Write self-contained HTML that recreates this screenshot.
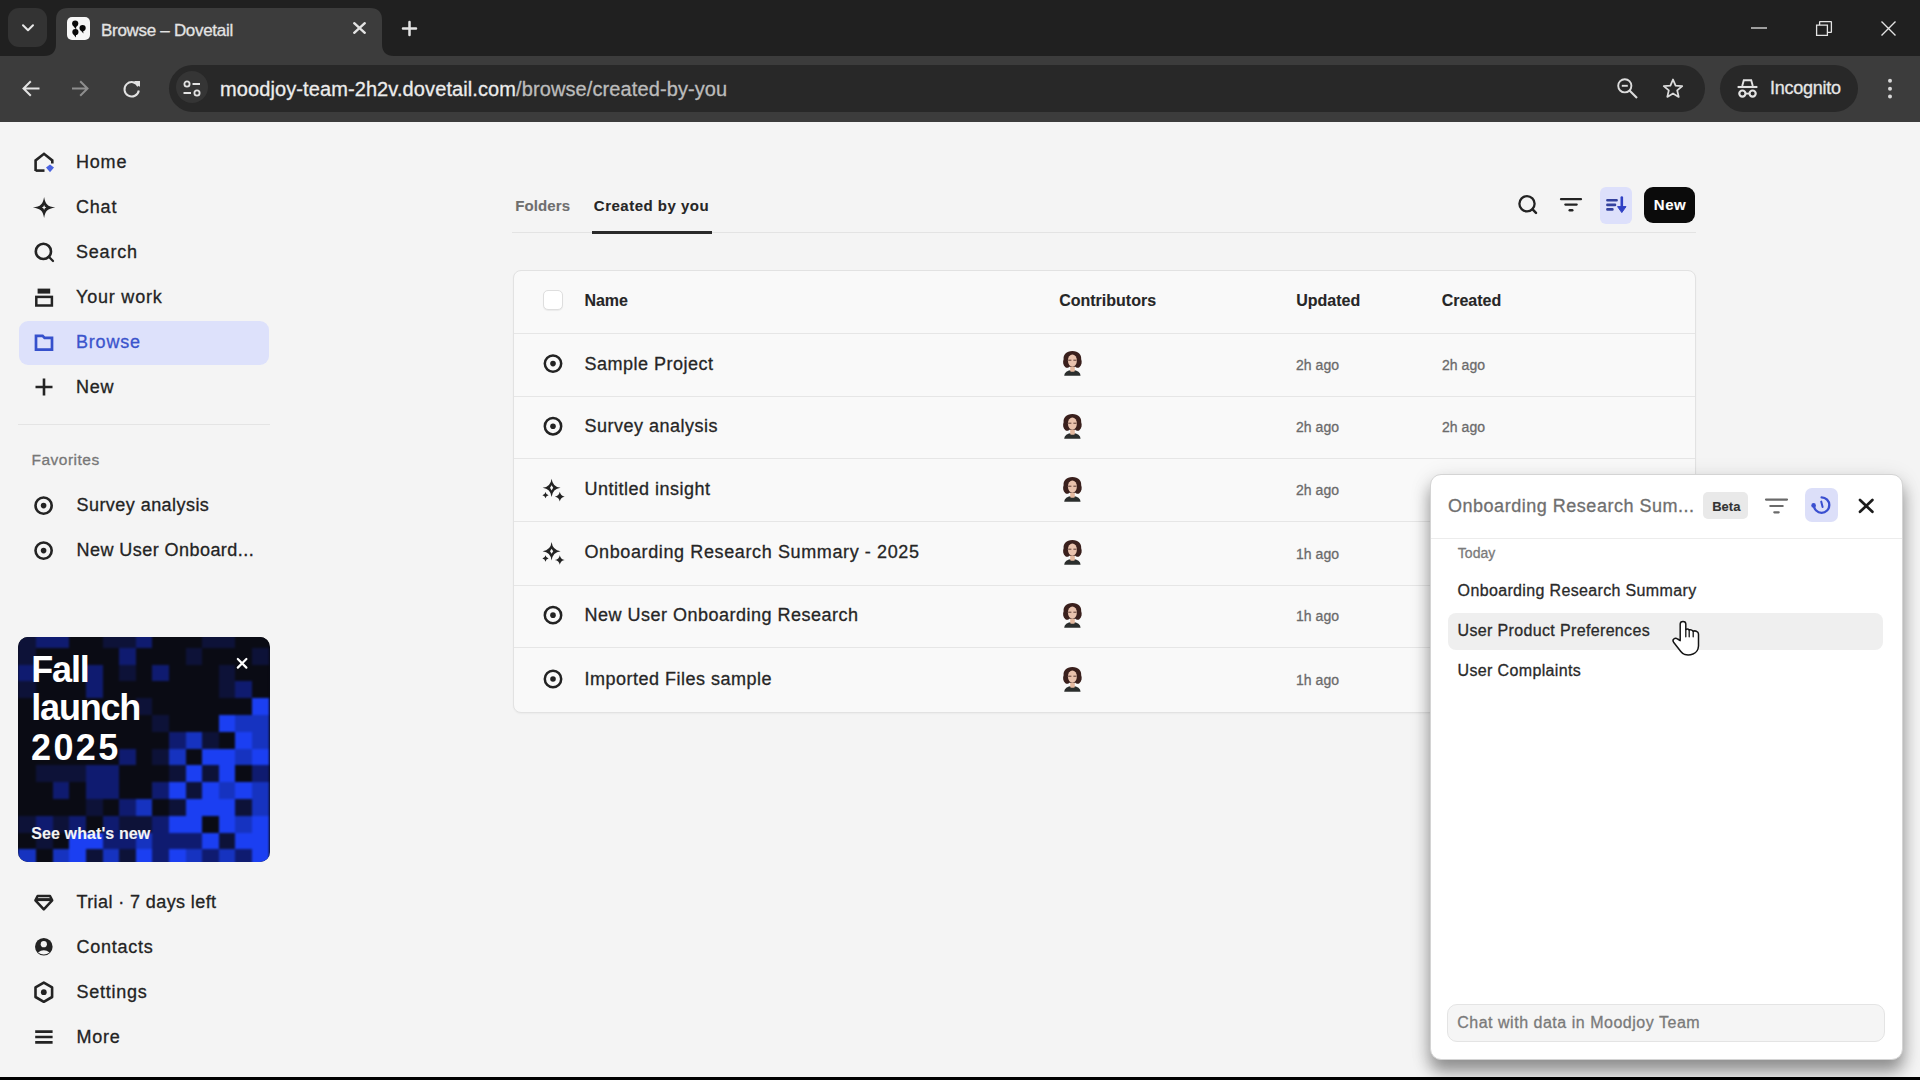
<!DOCTYPE html>
<html><head><meta charset="utf-8">
<style>
*{box-sizing:border-box;margin:0;padding:0}
html,body{width:1920px;height:1080px;overflow:hidden;background:#f4f4f4;font-family:"Liberation Sans",sans-serif;color:#1f1f1f;position:relative}
.r{position:absolute}
.t{position:absolute;white-space:nowrap;line-height:1;-webkit-text-stroke:0.3px currentColor}
svg{position:absolute;overflow:visible}
</style></head>
<body>
<div class="r" style="left:0px;top:0px;width:1920px;height:56px;background:#202020;border-radius:0px;"></div>
<div class="r" style="left:0px;top:56px;width:1920px;height:66px;background:#3c3c3c;border-radius:0px;"></div>
<div class="r" style="left:8px;top:8px;width:39px;height:39px;background:#333333;border-radius:11px;"></div>
<svg style="left:22px;top:24px;" width="12" height="8" viewBox="0 0 12 8"><path d="M1 1.2 L6 6.2 L11 1.2" fill="none" stroke="#e8e8e8" stroke-width="2" stroke-linecap="round" stroke-linejoin="round"/></svg>
<svg style="left:44px;top:8px;" width="352" height="48" viewBox="0 0 352 48"><path d="M0 48 Q12 48 12 36 L12 12 Q12 0 24 0 L326 0 Q338 0 338 12 L338 36 Q338 48 350 48 Z" fill="#3c3c3c"/></svg>
<div class="r" style="left:67px;top:17px;width:23px;height:23px;background:#f7f7f7;border-radius:5px;"></div>
<svg style="left:67px;top:17px;" width="23" height="23" viewBox="0 0 23 23"><g fill="#0a0a0a"><circle cx="8.2" cy="6.6" r="3.1"/><path d="M6 6.5 Q6.5 10.8 9.3 12.6 Q8.6 9.2 10.6 7.4 Z"/><circle cx="15.6" cy="11" r="3.1"/><path d="M13.3 10.8 Q13.8 15 16.4 16.6 Q15.8 13.4 18 11.8 Z"/><circle cx="8.4" cy="15" r="3.1"/><path d="M6.2 15 Q6.6 18.8 8.8 20.6 Q8.4 17.6 10.8 16.2 Z"/></g></svg>
<div class="t" style="left:101px;top:21.91px;font-size:17px;color:#e3e3e3;font-weight:400;letter-spacing:-0.3px;">Browse – Dovetail</div>
<svg style="left:353px;top:22px;" width="13" height="12" viewBox="0 0 13 12"><path d="M1.2 1.2 L11.8 10.8 M11.8 1.2 L1.2 10.8" stroke="#e3e3e3" stroke-width="2.4" stroke-linecap="round"/></svg>
<svg style="left:402px;top:21px;" width="15" height="15" viewBox="0 0 15 15"><path d="M7.5 1 V14 M1 7.5 H14" stroke="#e3e3e3" stroke-width="2.5" stroke-linecap="round"/></svg>
<svg style="left:1751px;top:27px;" width="16" height="2" viewBox="0 0 16 2"><path d="M0 1 H16" stroke="#e3e3e3" stroke-width="1.3"/></svg>
<svg style="left:1816px;top:21px;" width="16" height="15" viewBox="0 0 16 15"><path d="M0.6 4.2 H11.4 V14.4 H0.6 Z M3.6 4.2 V1 Q3.6 0.6 4 0.6 H15 Q15.4 0.6 15.4 1 V11 Q15.4 11.4 15 11.4 H11.4" fill="none" stroke="#e3e3e3" stroke-width="1.3"/></svg>
<svg style="left:1881px;top:21px;" width="15" height="15" viewBox="0 0 15 15"><path d="M0.5 0.5 L14.5 14.5 M14.5 0.5 L0.5 14.5" stroke="#e3e3e3" stroke-width="1.4"/></svg>
<svg style="left:22px;top:80px;" width="18" height="17" viewBox="0 0 18 17"><path d="M17.5 8.5 H2 M8.8 1.2 L1.5 8.5 L8.8 15.8" fill="none" stroke="#e3e3e3" stroke-width="2"/></svg>
<svg style="left:72px;top:80px;" width="17" height="17" viewBox="0 0 17 17"><path d="M0 8.5 H15.5 M8.2 1.2 L15.5 8.5 L8.2 15.8" fill="none" stroke="#8e8e8e" stroke-width="2"/></svg>
<svg style="left:123px;top:80px;" width="18" height="18" viewBox="0 0 18 18"><path d="M15.2 6.2 A7.2 7.2 0 1 0 15.8 10.5" fill="none" stroke="#e3e3e3" stroke-width="2"/><path d="M11 1 H17 V7 Z" fill="#e3e3e3"/></svg>
<div class="r" style="left:169px;top:65px;width:1536px;height:47px;background:#282828;border-radius:23.5px;"></div>
<div class="r" style="left:176px;top:71px;width:32px;height:32px;background:#353535;border-radius:16px;"></div>
<svg style="left:181px;top:79px;" width="22" height="20" viewBox="0 0 22 20"><circle cx="6" cy="5" r="2.6" fill="none" stroke="#e3e3e3" stroke-width="1.8"/><path d="M11.5 5 H19" stroke="#e3e3e3" stroke-width="2"/><path d="M2.5 14 H10" stroke="#e3e3e3" stroke-width="2"/><circle cx="16" cy="14" r="2.6" fill="none" stroke="#e3e3e3" stroke-width="1.8"/></svg>
<div class="t" style="left:220px;top:78.87px;font-size:20px;color:#ececec;font-weight:400;letter-spacing:0.1px;">moodjoy-team-2h2v.dovetail.com<span style="color:#bcbcbc">/browse/created-by-you</span></div>
<svg style="left:1617px;top:78px;" width="22" height="21" viewBox="0 0 22 21"><circle cx="7.8" cy="7.8" r="6.6" fill="none" stroke="#dcdcdc" stroke-width="1.9"/><path d="M4.8 7.8 H10.8" stroke="#dcdcdc" stroke-width="1.9"/><path d="M12.5 12.5 L20 20" stroke="#dcdcdc" stroke-width="2.1"/></svg>
<svg style="left:1662px;top:78px;" width="22" height="21" viewBox="0 0 22 21"><path d="M11 1.5 L13.6 7.6 L20.2 8.1 L15.2 12.4 L16.7 18.9 L11 15.4 L5.3 18.9 L6.8 12.4 L1.8 8.1 L8.4 7.6 Z" fill="none" stroke="#dcdcdc" stroke-width="1.8" stroke-linejoin="round"/></svg>
<div class="r" style="left:1720px;top:65px;width:138px;height:47px;background:#282828;border-radius:23.5px;"></div>
<svg style="left:1737px;top:79px;" width="21" height="19" viewBox="0 0 21 19"><path d="M5.2 7 L6.8 1.2 H14.2 L15.8 7" fill="none" stroke="#e3e3e3" stroke-width="1.9"/><path d="M0.6 8 H20.4" stroke="#e3e3e3" stroke-width="2.1"/><circle cx="5.4" cy="14.6" r="3.1" fill="none" stroke="#e3e3e3" stroke-width="2.2"/><circle cx="15.6" cy="14.6" r="3.1" fill="none" stroke="#e3e3e3" stroke-width="2.2"/><path d="M8 14.6 H13" stroke="#e3e3e3" stroke-width="1.8"/></svg>
<div class="t" style="left:1770px;top:79.46px;font-size:18px;color:#e6e6e6;font-weight:400;letter-spacing:-0.25px;">Incognito</div>
<svg style="left:1886px;top:78px;" width="8" height="21" viewBox="0 0 8 21"><circle cx="4" cy="2.7" r="2" fill="#d8d8d8"/><circle cx="4" cy="10.8" r="2" fill="#d8d8d8"/><circle cx="4" cy="18.5" r="2" fill="#d8d8d8"/></svg>
<div class="r" style="left:19px;top:320.5px;width:250px;height:44px;background:#dde1fb;border-radius:9px;"></div>
<div class="t" style="left:76px;top:153.06px;font-size:18px;color:#232323;font-weight:400;letter-spacing:0.8px;">Home</div>
<div class="t" style="left:76px;top:198.06px;font-size:18px;color:#232323;font-weight:400;letter-spacing:0.8px;">Chat</div>
<div class="t" style="left:76px;top:243.06px;font-size:18px;color:#232323;font-weight:400;letter-spacing:0.8px;">Search</div>
<div class="t" style="left:76px;top:288.26px;font-size:18px;color:#232323;font-weight:400;letter-spacing:0.8px;">Your work</div>
<div class="t" style="left:76px;top:333.46px;font-size:18px;color:#3b54cc;font-weight:400;letter-spacing:0.8px;">Browse</div>
<div class="t" style="left:76px;top:377.96px;font-size:18px;color:#232323;font-weight:400;letter-spacing:0.8px;">New</div>
<svg style="left:0px;top:0px;" width="1" height="1" viewBox="0 0 1 1"><path d="M35.6 171 V160.4 L44 153.8 L52.3 160.4 V163.5" fill="none" stroke="#232323" stroke-width="2.6" stroke-linejoin="miter"/><path d="M35.6 170.6 H44.5" fill="none" stroke="#232323" stroke-width="2.6"/><path d="M50 164.6 L54 167.6 L50 172.3 L46 167.6 Z" fill="#4a63e0"/><path d="M44.1 196.9 C45.4 204.3 47.300000000000004 206.2 55.3 207.5 C47.300000000000004 208.8 45.4 210.7 44.1 218.1 C42.800000000000004 210.7 40.9 208.8 32.900000000000006 207.5 C40.9 206.2 42.800000000000004 204.3 44.1 196.9 Z" fill="#232323"/><path d="M44.1 204.9 Q44.5 207.1 46.3 207.5 Q44.5 207.9 44.1 210.1 Q43.7 207.9 41.9 207.5 Q43.7 207.1 44.1 204.9 Z" fill="#f4f4f4"/><circle cx="43.4" cy="251.4" r="7.6" fill="none" stroke="#232323" stroke-width="2.6"/><path d="M48.8 256.8 L53 261" stroke="#232323" stroke-width="2.3" stroke-linecap="round"/><rect x="37.6" y="288.6" width="12.6" height="5" fill="#232323"/><rect x="36.3" y="296.9" width="15.6" height="8.6" fill="none" stroke="#232323" stroke-width="2.5"/><path d="M36 349.6 V335.9 H42.6 L44.6 337.9 H52 V349.6 Z" fill="none" stroke="#3550cc" stroke-width="2.7" stroke-linejoin="miter"/><path d="M44 378.5 V395.5 M35.5 387 H52.5" stroke="#232323" stroke-width="2.6"/></svg>
<div class="r" style="left:18px;top:423.5px;width:252px;height:1.5px;background:#e4e4e4;border-radius:0px;"></div>
<div class="t" style="left:31.5px;top:452.08px;font-size:15.5px;color:#777777;font-weight:400;letter-spacing:0.5px;">Favorites</div>
<div class="t" style="left:76.5px;top:496.06px;font-size:18px;color:#232323;font-weight:400;letter-spacing:0.45px;">Survey analysis</div>
<svg style="left:0px;top:0px;" width="1" height="1" viewBox="0 0 1 1"><circle cx="43.6" cy="505.6" r="8.1" fill="none" stroke="#232323" stroke-width="2.6"/><circle cx="43.6" cy="505.6" r="2.8" fill="#232323"/></svg>
<div class="t" style="left:76.5px;top:541.06px;font-size:18px;color:#232323;font-weight:400;letter-spacing:0.45px;">New User Onboard...</div>
<svg style="left:0px;top:0px;" width="1" height="1" viewBox="0 0 1 1"><circle cx="43.6" cy="550.6" r="8.1" fill="none" stroke="#232323" stroke-width="2.6"/><circle cx="43.6" cy="550.6" r="2.8" fill="#232323"/></svg>
<div class="r" style="left:18px;top:637px;width:252px;height:225px;border-radius:10px;overflow:hidden;background:#0a0b14"><div style="position:absolute;left:0;top:0;width:252px;height:225px;filter:blur(1px)"><div style="position:absolute;left:0.0px;top:-6.0px;width:18.5px;height:17.2px;background:#0d1238"></div><div style="position:absolute;left:18.1px;top:-6.0px;width:17.0px;height:17.2px;background:#0f1b70"></div><div style="position:absolute;left:34.7px;top:-6.0px;width:17.0px;height:17.2px;background:#0f1b70"></div><div style="position:absolute;left:51.3px;top:-6.0px;width:17.0px;height:17.2px;background:#0a0b14"></div><div style="position:absolute;left:67.9px;top:-6.0px;width:17.0px;height:17.2px;background:#0a0b14"></div><div style="position:absolute;left:84.5px;top:-6.0px;width:17.0px;height:17.2px;background:#0d1238"></div><div style="position:absolute;left:101.1px;top:-6.0px;width:17.0px;height:17.2px;background:#0d1238"></div><div style="position:absolute;left:117.7px;top:-6.0px;width:17.0px;height:17.2px;background:#0f1b70"></div><div style="position:absolute;left:134.3px;top:-6.0px;width:17.0px;height:17.2px;background:#0a0b14"></div><div style="position:absolute;left:150.9px;top:-6.0px;width:17.0px;height:17.2px;background:#0a0b14"></div><div style="position:absolute;left:167.5px;top:-6.0px;width:17.0px;height:17.2px;background:#0a0b14"></div><div style="position:absolute;left:184.1px;top:-6.0px;width:17.0px;height:17.2px;background:#0d1238"></div><div style="position:absolute;left:200.7px;top:-6.0px;width:17.0px;height:17.2px;background:#0d1238"></div><div style="position:absolute;left:217.3px;top:-6.0px;width:17.0px;height:17.2px;background:#0a0b14"></div><div style="position:absolute;left:233.9px;top:-6.0px;width:17.0px;height:17.2px;background:#0a0b14"></div><div style="position:absolute;left:0.0px;top:10.8px;width:18.5px;height:17.2px;background:#0d1238"></div><div style="position:absolute;left:18.1px;top:10.8px;width:17.0px;height:17.2px;background:#0a0b14"></div><div style="position:absolute;left:34.7px;top:10.8px;width:17.0px;height:17.2px;background:#0a0b14"></div><div style="position:absolute;left:51.3px;top:10.8px;width:17.0px;height:17.2px;background:#0a0b14"></div><div style="position:absolute;left:67.9px;top:10.8px;width:17.0px;height:17.2px;background:#0a0b14"></div><div style="position:absolute;left:84.5px;top:10.8px;width:17.0px;height:17.2px;background:#0a0b14"></div><div style="position:absolute;left:101.1px;top:10.8px;width:17.0px;height:17.2px;background:#0f1b70"></div><div style="position:absolute;left:117.7px;top:10.8px;width:17.0px;height:17.2px;background:#0a0b14"></div><div style="position:absolute;left:134.3px;top:10.8px;width:17.0px;height:17.2px;background:#0a0b14"></div><div style="position:absolute;left:150.9px;top:10.8px;width:17.0px;height:17.2px;background:#0a0b14"></div><div style="position:absolute;left:167.5px;top:10.8px;width:17.0px;height:17.2px;background:#0d1238"></div><div style="position:absolute;left:184.1px;top:10.8px;width:17.0px;height:17.2px;background:#0a0b14"></div><div style="position:absolute;left:200.7px;top:10.8px;width:17.0px;height:17.2px;background:#0a0b14"></div><div style="position:absolute;left:217.3px;top:10.8px;width:17.0px;height:17.2px;background:#0a0b14"></div><div style="position:absolute;left:233.9px;top:10.8px;width:17.0px;height:17.2px;background:#0d1238"></div><div style="position:absolute;left:0.0px;top:27.6px;width:18.5px;height:17.2px;background:#0f1b70"></div><div style="position:absolute;left:18.1px;top:27.6px;width:17.0px;height:17.2px;background:#0a0b14"></div><div style="position:absolute;left:34.7px;top:27.6px;width:17.0px;height:17.2px;background:#0a0b14"></div><div style="position:absolute;left:51.3px;top:27.6px;width:17.0px;height:17.2px;background:#0a0b14"></div><div style="position:absolute;left:67.9px;top:27.6px;width:17.0px;height:17.2px;background:#0f1b70"></div><div style="position:absolute;left:84.5px;top:27.6px;width:17.0px;height:17.2px;background:#0a0b14"></div><div style="position:absolute;left:101.1px;top:27.6px;width:17.0px;height:17.2px;background:#0d1238"></div><div style="position:absolute;left:117.7px;top:27.6px;width:17.0px;height:17.2px;background:#0a0b14"></div><div style="position:absolute;left:134.3px;top:27.6px;width:17.0px;height:17.2px;background:#0f1b70"></div><div style="position:absolute;left:150.9px;top:27.6px;width:17.0px;height:17.2px;background:#0a0b14"></div><div style="position:absolute;left:167.5px;top:27.6px;width:17.0px;height:17.2px;background:#0a0b14"></div><div style="position:absolute;left:184.1px;top:27.6px;width:17.0px;height:17.2px;background:#0a0b14"></div><div style="position:absolute;left:200.7px;top:27.6px;width:17.0px;height:17.2px;background:#0d1238"></div><div style="position:absolute;left:217.3px;top:27.6px;width:17.0px;height:17.2px;background:#0a0b14"></div><div style="position:absolute;left:233.9px;top:27.6px;width:17.0px;height:17.2px;background:#0a0b14"></div><div style="position:absolute;left:0.0px;top:44.4px;width:18.5px;height:17.2px;background:#0d1238"></div><div style="position:absolute;left:18.1px;top:44.4px;width:17.0px;height:17.2px;background:#0a0b14"></div><div style="position:absolute;left:34.7px;top:44.4px;width:17.0px;height:17.2px;background:#0a0b14"></div><div style="position:absolute;left:51.3px;top:44.4px;width:17.0px;height:17.2px;background:#0a0b14"></div><div style="position:absolute;left:67.9px;top:44.4px;width:17.0px;height:17.2px;background:#0f1b70"></div><div style="position:absolute;left:84.5px;top:44.4px;width:17.0px;height:17.2px;background:#0a0b14"></div><div style="position:absolute;left:101.1px;top:44.4px;width:17.0px;height:17.2px;background:#0a0b14"></div><div style="position:absolute;left:117.7px;top:44.4px;width:17.0px;height:17.2px;background:#0a0b14"></div><div style="position:absolute;left:134.3px;top:44.4px;width:17.0px;height:17.2px;background:#0a0b14"></div><div style="position:absolute;left:150.9px;top:44.4px;width:17.0px;height:17.2px;background:#0a0b14"></div><div style="position:absolute;left:167.5px;top:44.4px;width:17.0px;height:17.2px;background:#0a0b14"></div><div style="position:absolute;left:184.1px;top:44.4px;width:17.0px;height:17.2px;background:#0a0b14"></div><div style="position:absolute;left:200.7px;top:44.4px;width:17.0px;height:17.2px;background:#0d1238"></div><div style="position:absolute;left:217.3px;top:44.4px;width:17.0px;height:17.2px;background:#0f1b70"></div><div style="position:absolute;left:233.9px;top:44.4px;width:17.0px;height:17.2px;background:#0a0b14"></div><div style="position:absolute;left:0.0px;top:61.2px;width:18.5px;height:17.2px;background:#0a0b14"></div><div style="position:absolute;left:18.1px;top:61.2px;width:17.0px;height:17.2px;background:#0a0b14"></div><div style="position:absolute;left:34.7px;top:61.2px;width:17.0px;height:17.2px;background:#0a0b14"></div><div style="position:absolute;left:51.3px;top:61.2px;width:17.0px;height:17.2px;background:#0a0b14"></div><div style="position:absolute;left:67.9px;top:61.2px;width:17.0px;height:17.2px;background:#0a0b14"></div><div style="position:absolute;left:84.5px;top:61.2px;width:17.0px;height:17.2px;background:#0a0b14"></div><div style="position:absolute;left:101.1px;top:61.2px;width:17.0px;height:17.2px;background:#0a0b14"></div><div style="position:absolute;left:117.7px;top:61.2px;width:17.0px;height:17.2px;background:#0d1238"></div><div style="position:absolute;left:134.3px;top:61.2px;width:17.0px;height:17.2px;background:#0a0b14"></div><div style="position:absolute;left:150.9px;top:61.2px;width:17.0px;height:17.2px;background:#0a0b14"></div><div style="position:absolute;left:167.5px;top:61.2px;width:17.0px;height:17.2px;background:#0a0b14"></div><div style="position:absolute;left:184.1px;top:61.2px;width:17.0px;height:17.2px;background:#0a0b14"></div><div style="position:absolute;left:200.7px;top:61.2px;width:17.0px;height:17.2px;background:#0a0b14"></div><div style="position:absolute;left:217.3px;top:61.2px;width:17.0px;height:17.2px;background:#0a0b14"></div><div style="position:absolute;left:233.9px;top:61.2px;width:17.0px;height:17.2px;background:#1b3ff2"></div><div style="position:absolute;left:0.0px;top:78.0px;width:18.5px;height:17.2px;background:#0a0b14"></div><div style="position:absolute;left:18.1px;top:78.0px;width:17.0px;height:17.2px;background:#0a0b14"></div><div style="position:absolute;left:34.7px;top:78.0px;width:17.0px;height:17.2px;background:#0a0b14"></div><div style="position:absolute;left:51.3px;top:78.0px;width:17.0px;height:17.2px;background:#0a0b14"></div><div style="position:absolute;left:67.9px;top:78.0px;width:17.0px;height:17.2px;background:#0a0b14"></div><div style="position:absolute;left:84.5px;top:78.0px;width:17.0px;height:17.2px;background:#0a0b14"></div><div style="position:absolute;left:101.1px;top:78.0px;width:17.0px;height:17.2px;background:#0a0b14"></div><div style="position:absolute;left:117.7px;top:78.0px;width:17.0px;height:17.2px;background:#0a0b14"></div><div style="position:absolute;left:134.3px;top:78.0px;width:17.0px;height:17.2px;background:#0d1238"></div><div style="position:absolute;left:150.9px;top:78.0px;width:17.0px;height:17.2px;background:#0a0b14"></div><div style="position:absolute;left:167.5px;top:78.0px;width:17.0px;height:17.2px;background:#0a0b14"></div><div style="position:absolute;left:184.1px;top:78.0px;width:17.0px;height:17.2px;background:#0a0b14"></div><div style="position:absolute;left:200.7px;top:78.0px;width:17.0px;height:17.2px;background:#1b3ff2"></div><div style="position:absolute;left:217.3px;top:78.0px;width:17.0px;height:17.2px;background:#1633c0"></div><div style="position:absolute;left:233.9px;top:78.0px;width:17.0px;height:17.2px;background:#1633c0"></div><div style="position:absolute;left:0.0px;top:94.8px;width:18.5px;height:17.2px;background:#0a0b14"></div><div style="position:absolute;left:18.1px;top:94.8px;width:17.0px;height:17.2px;background:#0a0b14"></div><div style="position:absolute;left:34.7px;top:94.8px;width:17.0px;height:17.2px;background:#0a0b14"></div><div style="position:absolute;left:51.3px;top:94.8px;width:17.0px;height:17.2px;background:#0a0b14"></div><div style="position:absolute;left:67.9px;top:94.8px;width:17.0px;height:17.2px;background:#0a0b14"></div><div style="position:absolute;left:84.5px;top:94.8px;width:17.0px;height:17.2px;background:#0a0b14"></div><div style="position:absolute;left:101.1px;top:94.8px;width:17.0px;height:17.2px;background:#0a0b14"></div><div style="position:absolute;left:117.7px;top:94.8px;width:17.0px;height:17.2px;background:#0a0b14"></div><div style="position:absolute;left:134.3px;top:94.8px;width:17.0px;height:17.2px;background:#0a0b14"></div><div style="position:absolute;left:150.9px;top:94.8px;width:17.0px;height:17.2px;background:#0f1b70"></div><div style="position:absolute;left:167.5px;top:94.8px;width:17.0px;height:17.2px;background:#1633c0"></div><div style="position:absolute;left:184.1px;top:94.8px;width:17.0px;height:17.2px;background:#0d1238"></div><div style="position:absolute;left:200.7px;top:94.8px;width:17.0px;height:17.2px;background:#0a0b14"></div><div style="position:absolute;left:217.3px;top:94.8px;width:17.0px;height:17.2px;background:#1b3ff2"></div><div style="position:absolute;left:233.9px;top:94.8px;width:17.0px;height:17.2px;background:#1633c0"></div><div style="position:absolute;left:0.0px;top:111.6px;width:18.5px;height:17.2px;background:#0a0b14"></div><div style="position:absolute;left:18.1px;top:111.6px;width:17.0px;height:17.2px;background:#0a0b14"></div><div style="position:absolute;left:34.7px;top:111.6px;width:17.0px;height:17.2px;background:#0a0b14"></div><div style="position:absolute;left:51.3px;top:111.6px;width:17.0px;height:17.2px;background:#0a0b14"></div><div style="position:absolute;left:67.9px;top:111.6px;width:17.0px;height:17.2px;background:#0a0b14"></div><div style="position:absolute;left:84.5px;top:111.6px;width:17.0px;height:17.2px;background:#0a0b14"></div><div style="position:absolute;left:101.1px;top:111.6px;width:17.0px;height:17.2px;background:#0f1b70"></div><div style="position:absolute;left:117.7px;top:111.6px;width:17.0px;height:17.2px;background:#0a0b14"></div><div style="position:absolute;left:134.3px;top:111.6px;width:17.0px;height:17.2px;background:#0d1238"></div><div style="position:absolute;left:150.9px;top:111.6px;width:17.0px;height:17.2px;background:#1633c0"></div><div style="position:absolute;left:167.5px;top:111.6px;width:17.0px;height:17.2px;background:#0a0b14"></div><div style="position:absolute;left:184.1px;top:111.6px;width:17.0px;height:17.2px;background:#1b3ff2"></div><div style="position:absolute;left:200.7px;top:111.6px;width:17.0px;height:17.2px;background:#1b3ff2"></div><div style="position:absolute;left:217.3px;top:111.6px;width:17.0px;height:17.2px;background:#1633c0"></div><div style="position:absolute;left:233.9px;top:111.6px;width:17.0px;height:17.2px;background:#1b3ff2"></div><div style="position:absolute;left:0.0px;top:128.4px;width:18.5px;height:17.2px;background:#0a0b14"></div><div style="position:absolute;left:18.1px;top:128.4px;width:17.0px;height:17.2px;background:#0d1238"></div><div style="position:absolute;left:34.7px;top:128.4px;width:17.0px;height:17.2px;background:#0d1238"></div><div style="position:absolute;left:51.3px;top:128.4px;width:17.0px;height:17.2px;background:#0d1238"></div><div style="position:absolute;left:67.9px;top:128.4px;width:17.0px;height:17.2px;background:#0f1b70"></div><div style="position:absolute;left:84.5px;top:128.4px;width:17.0px;height:17.2px;background:#0f1b70"></div><div style="position:absolute;left:101.1px;top:128.4px;width:17.0px;height:17.2px;background:#0a0b14"></div><div style="position:absolute;left:117.7px;top:128.4px;width:17.0px;height:17.2px;background:#0a0b14"></div><div style="position:absolute;left:134.3px;top:128.4px;width:17.0px;height:17.2px;background:#0a0b14"></div><div style="position:absolute;left:150.9px;top:128.4px;width:17.0px;height:17.2px;background:#0d1238"></div><div style="position:absolute;left:167.5px;top:128.4px;width:17.0px;height:17.2px;background:#1b3ff2"></div><div style="position:absolute;left:184.1px;top:128.4px;width:17.0px;height:17.2px;background:#0d1238"></div><div style="position:absolute;left:200.7px;top:128.4px;width:17.0px;height:17.2px;background:#1b3ff2"></div><div style="position:absolute;left:217.3px;top:128.4px;width:17.0px;height:17.2px;background:#0a0b14"></div><div style="position:absolute;left:233.9px;top:128.4px;width:17.0px;height:17.2px;background:#0f1b70"></div><div style="position:absolute;left:0.0px;top:145.2px;width:18.5px;height:17.2px;background:#0a0b14"></div><div style="position:absolute;left:18.1px;top:145.2px;width:17.0px;height:17.2px;background:#0a0b14"></div><div style="position:absolute;left:34.7px;top:145.2px;width:17.0px;height:17.2px;background:#0f1b70"></div><div style="position:absolute;left:51.3px;top:145.2px;width:17.0px;height:17.2px;background:#0a0b14"></div><div style="position:absolute;left:67.9px;top:145.2px;width:17.0px;height:17.2px;background:#0f1b70"></div><div style="position:absolute;left:84.5px;top:145.2px;width:17.0px;height:17.2px;background:#0f1b70"></div><div style="position:absolute;left:101.1px;top:145.2px;width:17.0px;height:17.2px;background:#0a0b14"></div><div style="position:absolute;left:117.7px;top:145.2px;width:17.0px;height:17.2px;background:#0a0b14"></div><div style="position:absolute;left:134.3px;top:145.2px;width:17.0px;height:17.2px;background:#0f1b70"></div><div style="position:absolute;left:150.9px;top:145.2px;width:17.0px;height:17.2px;background:#1b3ff2"></div><div style="position:absolute;left:167.5px;top:145.2px;width:17.0px;height:17.2px;background:#0d1238"></div><div style="position:absolute;left:184.1px;top:145.2px;width:17.0px;height:17.2px;background:#1b3ff2"></div><div style="position:absolute;left:200.7px;top:145.2px;width:17.0px;height:17.2px;background:#1633c0"></div><div style="position:absolute;left:217.3px;top:145.2px;width:17.0px;height:17.2px;background:#1b3ff2"></div><div style="position:absolute;left:233.9px;top:145.2px;width:17.0px;height:17.2px;background:#1633c0"></div><div style="position:absolute;left:0.0px;top:162.0px;width:18.5px;height:17.2px;background:#0a0b14"></div><div style="position:absolute;left:18.1px;top:162.0px;width:17.0px;height:17.2px;background:#0a0b14"></div><div style="position:absolute;left:34.7px;top:162.0px;width:17.0px;height:17.2px;background:#0a0b14"></div><div style="position:absolute;left:51.3px;top:162.0px;width:17.0px;height:17.2px;background:#0a0b14"></div><div style="position:absolute;left:67.9px;top:162.0px;width:17.0px;height:17.2px;background:#0d1238"></div><div style="position:absolute;left:84.5px;top:162.0px;width:17.0px;height:17.2px;background:#0a0b14"></div><div style="position:absolute;left:101.1px;top:162.0px;width:17.0px;height:17.2px;background:#0f1b70"></div><div style="position:absolute;left:117.7px;top:162.0px;width:17.0px;height:17.2px;background:#1633c0"></div><div style="position:absolute;left:134.3px;top:162.0px;width:17.0px;height:17.2px;background:#0a0b14"></div><div style="position:absolute;left:150.9px;top:162.0px;width:17.0px;height:17.2px;background:#0d1238"></div><div style="position:absolute;left:167.5px;top:162.0px;width:17.0px;height:17.2px;background:#1b3ff2"></div><div style="position:absolute;left:184.1px;top:162.0px;width:17.0px;height:17.2px;background:#1b3ff2"></div><div style="position:absolute;left:200.7px;top:162.0px;width:17.0px;height:17.2px;background:#1b3ff2"></div><div style="position:absolute;left:217.3px;top:162.0px;width:17.0px;height:17.2px;background:#0d1238"></div><div style="position:absolute;left:233.9px;top:162.0px;width:17.0px;height:17.2px;background:#1633c0"></div><div style="position:absolute;left:0.0px;top:178.8px;width:18.5px;height:17.2px;background:#0d1238"></div><div style="position:absolute;left:18.1px;top:178.8px;width:17.0px;height:17.2px;background:#0f1b70"></div><div style="position:absolute;left:34.7px;top:178.8px;width:17.0px;height:17.2px;background:#0d1238"></div><div style="position:absolute;left:51.3px;top:178.8px;width:17.0px;height:17.2px;background:#0f1b70"></div><div style="position:absolute;left:67.9px;top:178.8px;width:17.0px;height:17.2px;background:#0a0b14"></div><div style="position:absolute;left:84.5px;top:178.8px;width:17.0px;height:17.2px;background:#0f1b70"></div><div style="position:absolute;left:101.1px;top:178.8px;width:17.0px;height:17.2px;background:#0d1238"></div><div style="position:absolute;left:117.7px;top:178.8px;width:17.0px;height:17.2px;background:#0d1238"></div><div style="position:absolute;left:134.3px;top:178.8px;width:17.0px;height:17.2px;background:#0f1b70"></div><div style="position:absolute;left:150.9px;top:178.8px;width:17.0px;height:17.2px;background:#1b3ff2"></div><div style="position:absolute;left:167.5px;top:178.8px;width:17.0px;height:17.2px;background:#1b3ff2"></div><div style="position:absolute;left:184.1px;top:178.8px;width:17.0px;height:17.2px;background:#0a0b14"></div><div style="position:absolute;left:200.7px;top:178.8px;width:17.0px;height:17.2px;background:#1b3ff2"></div><div style="position:absolute;left:217.3px;top:178.8px;width:17.0px;height:17.2px;background:#1633c0"></div><div style="position:absolute;left:233.9px;top:178.8px;width:17.0px;height:17.2px;background:#1b3ff2"></div><div style="position:absolute;left:0.0px;top:195.6px;width:18.5px;height:17.2px;background:#0a0b14"></div><div style="position:absolute;left:18.1px;top:195.6px;width:17.0px;height:17.2px;background:#0d1238"></div><div style="position:absolute;left:34.7px;top:195.6px;width:17.0px;height:17.2px;background:#0a0b14"></div><div style="position:absolute;left:51.3px;top:195.6px;width:17.0px;height:17.2px;background:#1b3ff2"></div><div style="position:absolute;left:67.9px;top:195.6px;width:17.0px;height:17.2px;background:#1b3ff2"></div><div style="position:absolute;left:84.5px;top:195.6px;width:17.0px;height:17.2px;background:#0f1b70"></div><div style="position:absolute;left:101.1px;top:195.6px;width:17.0px;height:17.2px;background:#0f1b70"></div><div style="position:absolute;left:117.7px;top:195.6px;width:17.0px;height:17.2px;background:#1633c0"></div><div style="position:absolute;left:134.3px;top:195.6px;width:17.0px;height:17.2px;background:#0f1b70"></div><div style="position:absolute;left:150.9px;top:195.6px;width:17.0px;height:17.2px;background:#0f1b70"></div><div style="position:absolute;left:167.5px;top:195.6px;width:17.0px;height:17.2px;background:#0f1b70"></div><div style="position:absolute;left:184.1px;top:195.6px;width:17.0px;height:17.2px;background:#1b3ff2"></div><div style="position:absolute;left:200.7px;top:195.6px;width:17.0px;height:17.2px;background:#0d1238"></div><div style="position:absolute;left:217.3px;top:195.6px;width:17.0px;height:17.2px;background:#1b3ff2"></div><div style="position:absolute;left:233.9px;top:195.6px;width:17.0px;height:17.2px;background:#1b3ff2"></div><div style="position:absolute;left:0.0px;top:212.4px;width:18.5px;height:17.2px;background:#1633c0"></div><div style="position:absolute;left:18.1px;top:212.4px;width:17.0px;height:17.2px;background:#0a0b14"></div><div style="position:absolute;left:34.7px;top:212.4px;width:17.0px;height:17.2px;background:#1633c0"></div><div style="position:absolute;left:51.3px;top:212.4px;width:17.0px;height:17.2px;background:#1b3ff2"></div><div style="position:absolute;left:67.9px;top:212.4px;width:17.0px;height:17.2px;background:#0d1238"></div><div style="position:absolute;left:84.5px;top:212.4px;width:17.0px;height:17.2px;background:#1633c0"></div><div style="position:absolute;left:101.1px;top:212.4px;width:17.0px;height:17.2px;background:#0d1238"></div><div style="position:absolute;left:117.7px;top:212.4px;width:17.0px;height:17.2px;background:#1b3ff2"></div><div style="position:absolute;left:134.3px;top:212.4px;width:17.0px;height:17.2px;background:#0f1b70"></div><div style="position:absolute;left:150.9px;top:212.4px;width:17.0px;height:17.2px;background:#1b3ff2"></div><div style="position:absolute;left:167.5px;top:212.4px;width:17.0px;height:17.2px;background:#1633c0"></div><div style="position:absolute;left:184.1px;top:212.4px;width:17.0px;height:17.2px;background:#0f1b70"></div><div style="position:absolute;left:200.7px;top:212.4px;width:17.0px;height:17.2px;background:#1633c0"></div><div style="position:absolute;left:217.3px;top:212.4px;width:17.0px;height:17.2px;background:#0f1b70"></div><div style="position:absolute;left:233.9px;top:212.4px;width:17.0px;height:17.2px;background:#1b3ff2"></div></div></div>
<div class="t" style="left:31.3px;top:652.13px;font-size:36px;color:#ffffff;font-weight:700;letter-spacing:-1.2px;-webkit-text-stroke:0;">Fall</div>
<div class="t" style="left:31.3px;top:690.13px;font-size:36px;color:#ffffff;font-weight:700;letter-spacing:-1.2px;-webkit-text-stroke:0;">launch</div>
<div class="t" style="left:31px;top:729.73px;font-size:36px;color:#ffffff;font-weight:700;letter-spacing:2.4px;-webkit-text-stroke:0;">2025</div>
<div class="t" style="left:31.3px;top:826.06px;font-size:16px;color:#f4f4f4;font-weight:700;letter-spacing:0.1px;-webkit-text-stroke:0.1px currentColor;">See what's new</div>
<svg style="left:0px;top:0px;" width="1" height="1" viewBox="0 0 1 1"><path d="M237.8 659 L246.4 667.6 M246.4 659 L237.8 667.6" stroke="#fff" stroke-width="2.2" stroke-linecap="round"/></svg>
<div class="t" style="left:76.5px;top:892.66px;font-size:18px;color:#232323;font-weight:400;letter-spacing:0.4px;">Trial · 7 days left</div>
<div class="t" style="left:76.5px;top:938.06px;font-size:18px;color:#232323;font-weight:400;letter-spacing:0.75px;">Contacts</div>
<div class="t" style="left:76.5px;top:982.96px;font-size:18px;color:#232323;font-weight:400;letter-spacing:0.75px;">Settings</div>
<div class="t" style="left:76.5px;top:1027.66px;font-size:18px;color:#232323;font-weight:400;letter-spacing:0.75px;">More</div>
<svg style="left:0px;top:0px;" width="1" height="1" viewBox="0 0 1 1"><path d="M37.6 896 H50 L52.2 900.3 L43.8 909.4 L35.4 900.3 Z" fill="none" stroke="#232323" stroke-width="2.5" stroke-linejoin="round"/><path d="M36 899.6 H51.6" stroke="#232323" stroke-width="3"/><circle cx="43.8" cy="946.8" r="8.8" fill="#232323"/><circle cx="43.8" cy="944.2" r="3.1" fill="#f4f4f4"/><path d="M38 952.6 Q43.8 947.8 49.6 952.6 Q43.8 956.5 38 952.6 Z" fill="#f4f4f4"/><path d="M43.8 982.6 L52.1 987.4 V997 L43.8 1001.8 L35.5 997 V987.4 Z" fill="none" stroke="#232323" stroke-width="2.6" stroke-linejoin="round"/><circle cx="43.8" cy="992.2" r="2.9" fill="#232323"/><path d="M35.2 1031.6 H52.6 M35.2 1037 H52.6 M35.2 1042.4 H52.6" stroke="#232323" stroke-width="2.7"/></svg>
<div class="t" style="left:515.3px;top:197.70px;font-size:15px;color:#6e6e6e;font-weight:700;letter-spacing:0.1px;-webkit-text-stroke:0.1px currentColor;">Folders</div>
<div class="t" style="left:593.8px;top:197.70px;font-size:15px;color:#262626;font-weight:700;letter-spacing:0.5px;-webkit-text-stroke:0.1px currentColor;">Created by you</div>
<div class="r" style="left:512px;top:232px;width:1184px;height:1px;background:#e3e3e3;border-radius:0px;"></div>
<div class="r" style="left:592px;top:231px;width:119.5px;height:2.5px;background:#2a2a2a;border-radius:0px;"></div>
<svg style="left:0px;top:0px;" width="1" height="1" viewBox="0 0 1 1"><circle cx="1527" cy="203.8" r="7.6" fill="none" stroke="#232323" stroke-width="2.3"/><path d="M1532.6 209.4 L1536 212.8" stroke="#232323" stroke-width="2.5" stroke-linecap="round"/><path d="M1561 199.2 H1581" stroke="#232323" stroke-width="2.2" stroke-linecap="round"/><path d="M1565.3 204.6 H1576.7" stroke="#232323" stroke-width="2.2" stroke-linecap="round"/><path d="M1569.7 210.2 H1572.3" stroke="#232323" stroke-width="2.4" stroke-linecap="round"/></svg>
<div class="r" style="left:1600px;top:186.8px;width:32px;height:37px;background:#dde0fb;border-radius:6px;"></div>
<svg style="left:0px;top:0px;" width="1" height="1" viewBox="0 0 1 1"><path d="M1607.4 200.3 H1616.6 M1607.4 204.9 H1615 M1607.4 209.4 H1612.4" stroke="#34429e" stroke-width="2.6" stroke-linecap="round"/><path d="M1621.8 197.6 V208.5" stroke="#2f40c4" stroke-width="2.6" stroke-linecap="round"/><path d="M1617.6 206.6 L1626 206.6 L1621.8 212.6 Z" fill="#2f40c4" stroke="#2f40c4" stroke-width="1" stroke-linejoin="round"/></svg>
<div class="r" style="left:1644px;top:187px;width:51px;height:36px;background:#0b0b0b;border-radius:9px;"></div>
<div class="t" style="left:1653.8px;top:196.50px;font-size:15px;color:#ffffff;font-weight:700;letter-spacing:0.5px;-webkit-text-stroke:0.1px currentColor;">New</div>
<div class="r" style="left:512.5px;top:269.5px;width:1183.5px;height:443px;background:#f9f9f9;border-radius:8px;border:1px solid #e2e2e2;box-shadow:0 1px 2px rgba(0,0,0,0.04)"></div>
<div class="r" style="left:543px;top:290px;width:20px;height:20px;background:#ffffff;border-radius:5px;border:1px solid #dedede;box-shadow:0 1px 1px rgba(0,0,0,0.06)"></div>
<div class="t" style="left:584.4px;top:292.76px;font-size:16px;color:#262626;font-weight:700;letter-spacing:0px;-webkit-text-stroke:0.1px currentColor;">Name</div>
<div class="t" style="left:1059.2px;top:292.76px;font-size:16px;color:#262626;font-weight:700;letter-spacing:0px;-webkit-text-stroke:0.1px currentColor;">Contributors</div>
<div class="t" style="left:1296.2px;top:292.76px;font-size:16px;color:#262626;font-weight:700;letter-spacing:0px;-webkit-text-stroke:0.1px currentColor;">Updated</div>
<div class="t" style="left:1441.7px;top:292.76px;font-size:16px;color:#262626;font-weight:700;letter-spacing:0px;-webkit-text-stroke:0.1px currentColor;">Created</div>
<div class="r" style="left:513.5px;top:332.5px;width:1181.5px;height:1px;background:#e6e6e6;border-radius:0px;"></div>
<div class="t" style="left:584.4px;top:354.76px;font-size:18px;color:#262626;font-weight:400;letter-spacing:0.5px;">Sample Project</div>
<svg style="left:0px;top:0px;" width="1" height="1" viewBox="0 0 1 1"><circle cx="553" cy="363.6" r="8.2" fill="none" stroke="#232323" stroke-width="2.5"/><circle cx="553" cy="363.6" r="2.8" fill="#232323"/></svg>
<svg style="left:1062px;top:350.3px;" width="21" height="28" viewBox="0 0 21 28"><path d="M2.2 25.8 Q2.4 20.6 10.4 20 Q18.4 20.6 18.6 25.8 Z" fill="#2b2e2d"/><path d="M8.2 15.5 H12.8 V21.2 Q10.5 22.5 8.2 21.2 Z" fill="#e4b89e"/><path d="M10.4 1 C4.2 1 1.2 4.8 1.6 9.2 C0.6 11.8 1 15.2 3.4 17.2 C4.8 18.4 6.6 17.8 7.4 16.8 L13.4 16.8 C14.2 17.8 16 18.4 17.4 17.2 C19.8 15.2 20.2 11.8 19.2 9.2 C19.6 4.8 16.6 1 10.4 1 Z" fill="#3a201d"/><ellipse cx="10.4" cy="10.6" rx="4.5" ry="6.1" fill="#e9c2ad"/><path d="M5.6 8.4 Q6.6 3.6 10.8 3.8 Q14.6 4.2 15.4 8.6 Q15.6 3 10.6 2.6 Q5.4 2.8 5.6 8.4 Z" fill="#3a201d"/><path d="M6.2 10.2 H9.4 M11.4 10.2 H14.6" stroke="#5a3a33" stroke-width="1"/></svg>
<div class="t" style="left:1296px;top:357.85px;font-size:14px;color:#6b6b6b;font-weight:400;letter-spacing:0.05px;">2h ago</div>
<div class="t" style="left:1442px;top:357.85px;font-size:14px;color:#6b6b6b;font-weight:400;letter-spacing:0.05px;">2h ago</div>
<div class="r" style="left:513.5px;top:395.7px;width:1181.5px;height:1px;background:#e6e6e6;border-radius:0px;"></div>
<div class="t" style="left:584.4px;top:417.36px;font-size:18px;color:#262626;font-weight:400;letter-spacing:0.5px;">Survey analysis</div>
<svg style="left:0px;top:0px;" width="1" height="1" viewBox="0 0 1 1"><circle cx="553" cy="426.2" r="8.2" fill="none" stroke="#232323" stroke-width="2.5"/><circle cx="553" cy="426.2" r="2.8" fill="#232323"/></svg>
<svg style="left:1062px;top:412.9px;" width="21" height="28" viewBox="0 0 21 28"><path d="M2.2 25.8 Q2.4 20.6 10.4 20 Q18.4 20.6 18.6 25.8 Z" fill="#2b2e2d"/><path d="M8.2 15.5 H12.8 V21.2 Q10.5 22.5 8.2 21.2 Z" fill="#e4b89e"/><path d="M10.4 1 C4.2 1 1.2 4.8 1.6 9.2 C0.6 11.8 1 15.2 3.4 17.2 C4.8 18.4 6.6 17.8 7.4 16.8 L13.4 16.8 C14.2 17.8 16 18.4 17.4 17.2 C19.8 15.2 20.2 11.8 19.2 9.2 C19.6 4.8 16.6 1 10.4 1 Z" fill="#3a201d"/><ellipse cx="10.4" cy="10.6" rx="4.5" ry="6.1" fill="#e9c2ad"/><path d="M5.6 8.4 Q6.6 3.6 10.8 3.8 Q14.6 4.2 15.4 8.6 Q15.6 3 10.6 2.6 Q5.4 2.8 5.6 8.4 Z" fill="#3a201d"/><path d="M6.2 10.2 H9.4 M11.4 10.2 H14.6" stroke="#5a3a33" stroke-width="1"/></svg>
<div class="t" style="left:1296px;top:420.45px;font-size:14px;color:#6b6b6b;font-weight:400;letter-spacing:0.05px;">2h ago</div>
<div class="t" style="left:1442px;top:420.45px;font-size:14px;color:#6b6b6b;font-weight:400;letter-spacing:0.05px;">2h ago</div>
<div class="r" style="left:513.5px;top:457.7px;width:1181.5px;height:1px;background:#e6e6e6;border-radius:0px;"></div>
<div class="t" style="left:584.4px;top:480.01px;font-size:18px;color:#262626;font-weight:400;letter-spacing:0.5px;">Untitled insight</div>
<svg style="left:0px;top:0px;" width="1" height="1" viewBox="0 0 1 1"><path d="M551.6 478.65000000000003 Q552.6 486.85 560.6 487.85 Q552.6 488.85 551.6 497.05 Q550.6 488.85 542.6 487.85 Q550.6 486.85 551.6 478.65000000000003 Z" fill="#232323"/><path d="M551.6 485.25 L553.2 487.85 L551.6 490.45000000000005 L550 487.85 Z" fill="#f9f9f9"/><path d="M559.8 491.85 Q560.5 495.95000000000005 564.6999999999999 496.65000000000003 Q560.5 497.35 559.8 501.45000000000005 Q559.0999999999999 497.35 554.9 496.65000000000003 Q559.0999999999999 495.95000000000005 559.8 491.85 Z" fill="#232323"/><path d="M545.5 491.95000000000005 Q546.0 494.65000000000003 548.6 495.15000000000003 Q546.0 495.65000000000003 545.5 498.35 Q545.0 495.65000000000003 542.4 495.15000000000003 Q545.0 494.65000000000003 545.5 491.95000000000005 Z" fill="#232323"/></svg>
<svg style="left:1062px;top:475.55px;" width="21" height="28" viewBox="0 0 21 28"><path d="M2.2 25.8 Q2.4 20.6 10.4 20 Q18.4 20.6 18.6 25.8 Z" fill="#2b2e2d"/><path d="M8.2 15.5 H12.8 V21.2 Q10.5 22.5 8.2 21.2 Z" fill="#e4b89e"/><path d="M10.4 1 C4.2 1 1.2 4.8 1.6 9.2 C0.6 11.8 1 15.2 3.4 17.2 C4.8 18.4 6.6 17.8 7.4 16.8 L13.4 16.8 C14.2 17.8 16 18.4 17.4 17.2 C19.8 15.2 20.2 11.8 19.2 9.2 C19.6 4.8 16.6 1 10.4 1 Z" fill="#3a201d"/><ellipse cx="10.4" cy="10.6" rx="4.5" ry="6.1" fill="#e9c2ad"/><path d="M5.6 8.4 Q6.6 3.6 10.8 3.8 Q14.6 4.2 15.4 8.6 Q15.6 3 10.6 2.6 Q5.4 2.8 5.6 8.4 Z" fill="#3a201d"/><path d="M6.2 10.2 H9.4 M11.4 10.2 H14.6" stroke="#5a3a33" stroke-width="1"/></svg>
<div class="t" style="left:1296px;top:483.10px;font-size:14px;color:#6b6b6b;font-weight:400;letter-spacing:0.05px;">2h ago</div>
<div class="r" style="left:513.5px;top:521px;width:1181.5px;height:1px;background:#e6e6e6;border-radius:0px;"></div>
<div class="t" style="left:584.4px;top:543.41px;font-size:18px;color:#262626;font-weight:400;letter-spacing:0.62px;">Onboarding Research Summary - 2025</div>
<svg style="left:0px;top:0px;" width="1" height="1" viewBox="0 0 1 1"><path d="M551.6 542.05 Q552.6 550.25 560.6 551.25 Q552.6 552.25 551.6 560.45 Q550.6 552.25 542.6 551.25 Q550.6 550.25 551.6 542.05 Z" fill="#232323"/><path d="M551.6 548.65 L553.2 551.25 L551.6 553.85 L550 551.25 Z" fill="#f9f9f9"/><path d="M559.8 555.25 Q560.5 559.3499999999999 564.6999999999999 560.05 Q560.5 560.75 559.8 564.8499999999999 Q559.0999999999999 560.75 554.9 560.05 Q559.0999999999999 559.3499999999999 559.8 555.25 Z" fill="#232323"/><path d="M545.5 555.3499999999999 Q546.0 558.05 548.6 558.55 Q546.0 559.05 545.5 561.75 Q545.0 559.05 542.4 558.55 Q545.0 558.05 545.5 555.3499999999999 Z" fill="#232323"/></svg>
<svg style="left:1062px;top:538.95px;" width="21" height="28" viewBox="0 0 21 28"><path d="M2.2 25.8 Q2.4 20.6 10.4 20 Q18.4 20.6 18.6 25.8 Z" fill="#2b2e2d"/><path d="M8.2 15.5 H12.8 V21.2 Q10.5 22.5 8.2 21.2 Z" fill="#e4b89e"/><path d="M10.4 1 C4.2 1 1.2 4.8 1.6 9.2 C0.6 11.8 1 15.2 3.4 17.2 C4.8 18.4 6.6 17.8 7.4 16.8 L13.4 16.8 C14.2 17.8 16 18.4 17.4 17.2 C19.8 15.2 20.2 11.8 19.2 9.2 C19.6 4.8 16.6 1 10.4 1 Z" fill="#3a201d"/><ellipse cx="10.4" cy="10.6" rx="4.5" ry="6.1" fill="#e9c2ad"/><path d="M5.6 8.4 Q6.6 3.6 10.8 3.8 Q14.6 4.2 15.4 8.6 Q15.6 3 10.6 2.6 Q5.4 2.8 5.6 8.4 Z" fill="#3a201d"/><path d="M6.2 10.2 H9.4 M11.4 10.2 H14.6" stroke="#5a3a33" stroke-width="1"/></svg>
<div class="t" style="left:1296px;top:546.50px;font-size:14px;color:#6b6b6b;font-weight:400;letter-spacing:0.05px;">1h ago</div>
<div class="r" style="left:513.5px;top:584.5px;width:1181.5px;height:1px;background:#e6e6e6;border-radius:0px;"></div>
<div class="t" style="left:584.4px;top:606.31px;font-size:18px;color:#262626;font-weight:400;letter-spacing:0.5px;">New User Onboarding Research</div>
<svg style="left:0px;top:0px;" width="1" height="1" viewBox="0 0 1 1"><circle cx="553" cy="615.15" r="8.2" fill="none" stroke="#232323" stroke-width="2.5"/><circle cx="553" cy="615.15" r="2.8" fill="#232323"/></svg>
<svg style="left:1062px;top:601.85px;" width="21" height="28" viewBox="0 0 21 28"><path d="M2.2 25.8 Q2.4 20.6 10.4 20 Q18.4 20.6 18.6 25.8 Z" fill="#2b2e2d"/><path d="M8.2 15.5 H12.8 V21.2 Q10.5 22.5 8.2 21.2 Z" fill="#e4b89e"/><path d="M10.4 1 C4.2 1 1.2 4.8 1.6 9.2 C0.6 11.8 1 15.2 3.4 17.2 C4.8 18.4 6.6 17.8 7.4 16.8 L13.4 16.8 C14.2 17.8 16 18.4 17.4 17.2 C19.8 15.2 20.2 11.8 19.2 9.2 C19.6 4.8 16.6 1 10.4 1 Z" fill="#3a201d"/><ellipse cx="10.4" cy="10.6" rx="4.5" ry="6.1" fill="#e9c2ad"/><path d="M5.6 8.4 Q6.6 3.6 10.8 3.8 Q14.6 4.2 15.4 8.6 Q15.6 3 10.6 2.6 Q5.4 2.8 5.6 8.4 Z" fill="#3a201d"/><path d="M6.2 10.2 H9.4 M11.4 10.2 H14.6" stroke="#5a3a33" stroke-width="1"/></svg>
<div class="t" style="left:1296px;top:609.40px;font-size:14px;color:#6b6b6b;font-weight:400;letter-spacing:0.05px;">1h ago</div>
<div class="r" style="left:513.5px;top:646.8px;width:1181.5px;height:1px;background:#e6e6e6;border-radius:0px;"></div>
<div class="t" style="left:584.4px;top:670.16px;font-size:18px;color:#262626;font-weight:400;letter-spacing:0.5px;">Imported Files sample</div>
<svg style="left:0px;top:0px;" width="1" height="1" viewBox="0 0 1 1"><circle cx="553" cy="679.0" r="8.2" fill="none" stroke="#232323" stroke-width="2.5"/><circle cx="553" cy="679.0" r="2.8" fill="#232323"/></svg>
<svg style="left:1062px;top:665.7px;" width="21" height="28" viewBox="0 0 21 28"><path d="M2.2 25.8 Q2.4 20.6 10.4 20 Q18.4 20.6 18.6 25.8 Z" fill="#2b2e2d"/><path d="M8.2 15.5 H12.8 V21.2 Q10.5 22.5 8.2 21.2 Z" fill="#e4b89e"/><path d="M10.4 1 C4.2 1 1.2 4.8 1.6 9.2 C0.6 11.8 1 15.2 3.4 17.2 C4.8 18.4 6.6 17.8 7.4 16.8 L13.4 16.8 C14.2 17.8 16 18.4 17.4 17.2 C19.8 15.2 20.2 11.8 19.2 9.2 C19.6 4.8 16.6 1 10.4 1 Z" fill="#3a201d"/><ellipse cx="10.4" cy="10.6" rx="4.5" ry="6.1" fill="#e9c2ad"/><path d="M5.6 8.4 Q6.6 3.6 10.8 3.8 Q14.6 4.2 15.4 8.6 Q15.6 3 10.6 2.6 Q5.4 2.8 5.6 8.4 Z" fill="#3a201d"/><path d="M6.2 10.2 H9.4 M11.4 10.2 H14.6" stroke="#5a3a33" stroke-width="1"/></svg>
<div class="t" style="left:1296px;top:673.25px;font-size:14px;color:#6b6b6b;font-weight:400;letter-spacing:0.05px;">1h ago</div>
<div class="r" style="left:1430px;top:474px;width:472.5px;height:585.5px;background:#ffffff;border-radius:11px;border:1px solid #d4d4d4;box-shadow:0 12px 16px rgba(0,0,0,0.36),0 4px 22px rgba(0,0,0,0.12)"></div>
<div class="t" style="left:1448px;top:497.06px;font-size:18px;color:#6f6f6f;font-weight:400;letter-spacing:0.52px;">Onboarding Research Sum...</div>
<div class="r" style="left:1703px;top:492px;width:45px;height:27px;background:#e9e9e9;border-radius:5px;"></div>
<div class="t" style="left:1712.2px;top:500.00px;font-size:13px;color:#333333;font-weight:700;letter-spacing:0px;-webkit-text-stroke:0.1px currentColor;">Beta</div>
<svg style="left:0px;top:0px;" width="1" height="1" viewBox="0 0 1 1"><path d="M1766 499.6 H1787 M1770.3 506 H1782.7 M1774.3 512.3 H1778.7" stroke="#6a6a6a" stroke-width="2.2" stroke-linecap="round"/></svg>
<div class="r" style="left:1805px;top:488.2px;width:32.5px;height:34px;background:#dcdff9;border-radius:7px;"></div>
<svg style="left:0px;top:0px;" width="1" height="1" viewBox="0 0 1 1"><path d="M1821.6 497.4 A7.7 7.7 0 1 1 1813.9 505.1" fill="none" stroke="#3a4fd0" stroke-width="2.3" stroke-linecap="round"/><circle cx="1813.6" cy="505.4" r="2.3" fill="#3a4fd0"/><path d="M1821.2 501.6 L1822.6 507" fill="none" stroke="#3a4fd0" stroke-width="2" stroke-linecap="round"/></svg>
<svg style="left:0px;top:0px;" width="1" height="1" viewBox="0 0 1 1"><path d="M1860 500 L1872.4 511.8 M1872.4 500 L1860 511.8" stroke="#1c1c1c" stroke-width="2.7" stroke-linecap="round"/></svg>
<div class="r" style="left:1431px;top:537.5px;width:470.5px;height:1px;background:#ececec;border-radius:0px;"></div>
<div class="t" style="left:1457.8px;top:546.45px;font-size:14px;color:#7a7a7a;font-weight:400;letter-spacing:0.05px;">Today</div>
<div class="r" style="left:1448px;top:613px;width:435px;height:37px;background:#efefef;border-radius:8px;"></div>
<div class="t" style="left:1457.6px;top:582.96px;font-size:16px;color:#2a2a2a;font-weight:400;letter-spacing:0.35px;">Onboarding Research Summary</div>
<div class="t" style="left:1457.6px;top:623.06px;font-size:16px;color:#2a2a2a;font-weight:400;letter-spacing:0.35px;">User Product Preferences</div>
<div class="t" style="left:1457.6px;top:662.86px;font-size:16px;color:#2a2a2a;font-weight:400;letter-spacing:0.35px;">User Complaints</div>
<div class="r" style="left:1446.8px;top:1004.3px;width:438.6px;height:38px;background:#f5f5f5;border-radius:10px;border:1px solid #e4e4e4"></div>
<div class="t" style="left:1457.2px;top:1014.66px;font-size:16px;color:#7a7a7a;font-weight:400;letter-spacing:0.52px;">Chat with data in Moodjoy Team</div>
<svg style="left:1664px;top:612px;" width="48" height="48" viewBox="0 0 48 48"><path d="M16.2 28.6 L16.2 12 Q16.2 9.4 19 9.4 Q21.8 9.4 21.8 12 L21.8 17.6 Q23.5 16.2 25.2 17.9 Q27.2 17.0 29.2 19.2 Q31.6 18.2 33.8 20.2 Q34.5 21 34.5 22.6 L34.5 34 Q34.1 40 29 42 Q25 43.6 21 42.6 Q18.5 41.8 16.8 39.5 L9.6 30.2 Q8.3 28.2 9.8 27 Q11.6 25.6 13.6 27 Z" fill="#ffffff" stroke="#151515" stroke-width="1.5" stroke-linejoin="round"/><path d="M21.8 17.6 V24.8 M25.2 18 V24.8 M29.2 19.2 V24.8" stroke="#151515" stroke-width="1.3" stroke-linecap="round"/></svg>
<div class="r" style="left:0;top:1077px;width:1920px;height:3px;background:#000"></div>
</body></html>
